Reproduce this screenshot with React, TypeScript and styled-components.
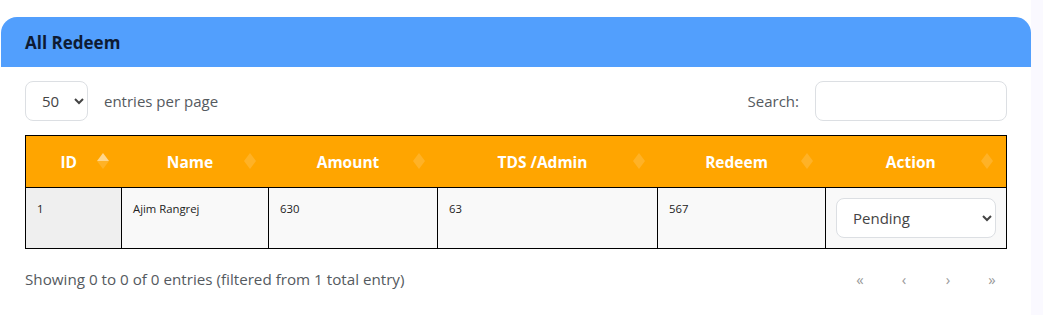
import React, { useState } from 'react'
import styled, { createGlobalStyle } from 'styled-components'

const GlobalStyle = createGlobalStyle`
  html, body {
    margin: 0;
    padding: 0;
    background: #ffffff;
    font-family: "Open Sans", "Noto Sans", sans-serif;
  }
`

type Column = { key: string; label: string; width: number; active?: boolean }

const columns: Column[] = [
  { key: 'id', label: 'ID', width: 96, active: true },
  { key: 'name', label: 'Name', width: 147 },
  { key: 'amount', label: 'Amount', width: 169 },
  { key: 'tds', label: 'TDS /Admin', width: 220 },
  { key: 'redeem', label: 'Redeem', width: 168 },
  { key: 'action', label: 'Action', width: 181 },
]

const rows = [{ id: 1, name: 'Ajim Rangrej', amount: 630, tds: 63, redeem: 567 }]

export default function App() {
  const [perPage, setPerPage] = useState('50')
  const [status, setStatus] = useState('Pending')

  return (
    <Page>
      <GlobalStyle />
      <Card>
        <CardHeader>
          <Title>All Redeem</Title>
        </CardHeader>
        <CardBody>
          <TopBar>
            <Group>
              <Select value={perPage} onChange={(e) => setPerPage(e.target.value)} width={63}>
                <option>10</option>
                <option>25</option>
                <option>50</option>
                <option>100</option>
              </Select>
              <Label>entries per page</Label>
            </Group>
            <Group>
              <Label>Search:</Label>
              <SearchInput type="text" />
            </Group>
          </TopBar>

          <Table>
            <colgroup>
              {columns.map((c) => (
                <col key={c.key} style={{ width: c.width }} />
              ))}
            </colgroup>
            <thead>
              <tr>
                {columns.map((c) => (
                  <Th key={c.key} active={c.active}>
                    {c.label}
                  </Th>
                ))}
              </tr>
            </thead>
            <tbody>
              {rows.map((r) => (
                <tr key={r.id}>
                  <Td sorted>{r.id}</Td>
                  <Td>{r.name}</Td>
                  <Td>{r.amount}</Td>
                  <Td>{r.tds}</Td>
                  <Td>{r.redeem}</Td>
                  <ActionTd>
                    <Select value={status} onChange={(e) => setStatus(e.target.value)} width={160}>
                      <option>Pending</option>
                      <option>Approved</option>
                      <option>Rejected</option>
                    </Select>
                  </ActionTd>
                </tr>
              ))}
            </tbody>
          </Table>

          <BottomBar>
            <Info>Showing 0 to 0 of 0 entries (filtered from 1 total entry)</Info>
            <Pager>
              <PageLink>«</PageLink>
              <PageLink>‹</PageLink>
              <PageLink>›</PageLink>
              <PageLink>»</PageLink>
            </Pager>
          </BottomBar>
        </CardBody>
      </Card>
    </Page>
  )
}

const Page = styled.div`
  padding: 17px 12px 0 1px;
  background: linear-gradient(to right, #ffffff 1031px, #faf9ff 1031px);
  min-height: 315px;
  box-sizing: border-box;
`

const Card = styled.div`
  width: 1030px;
  background: #ffffff;
  border-radius: 16px 16px 0 0;
`

const CardHeader = styled.div`
  height: 50px;
  display: flex;
  align-items: center;
  padding: 0 24px;
  background: #529ffd;
  border-radius: 16px 16px 0 0;
`

const Title = styled.h4`
  margin: 0;
  font-size: 17px;
  font-weight: 700;
  color: #0e1b33;
`

const CardBody = styled.div`
  padding: 14px 24px 20px 24px;
`

const TopBar = styled.div`
  display: flex;
  justify-content: space-between;
  align-items: center;
  height: 40px;
  margin-bottom: 14px;
`

const Group = styled.div`
  display: flex;
  align-items: center;
  gap: 16px;
`

const Label = styled.span`
  font-size: 15px;
  color: #555a60;
`

const Select = styled.select<{ width: number }>`
  width: ${(p) => p.width}px;
  height: 40px;
  padding: 0 8px 0 12px;
  font-family: inherit;
  font-size: 15px;
  color: #444;
  background: #ffffff;
  border: 1px solid #dcdfe3;
  border-radius: 8px;
  outline: none;
`

const SearchInput = styled.input`
  width: 192px;
  height: 40px;
  box-sizing: border-box;
  border: 1px solid #dcdfe3;
  border-radius: 8px;
  outline: none;
`

const Table = styled.table`
  width: 982px;
  border-collapse: collapse;
  table-layout: fixed;
  border: 1px solid #000;
`

const Th = styled.th<{ active?: boolean }>`
  position: relative;
  height: 51px;
  padding: 0 20px 0 10px;
  background: #ffa500;
  color: #ffffff;
  font-size: 15.5px;
  font-weight: 700;
  text-align: center;

  &::before,
  &::after {
    content: '';
    position: absolute;
    right: 13px;
    border-left: 6px solid transparent;
    border-right: 6px solid transparent;
  }
  &::before {
    top: 17px;
    border-bottom: 8px solid ${(p) => (p.active ? 'rgba(255,255,255,0.55)' : 'rgba(255,255,255,0.15)')};
  }
  &::after {
    top: 25px;
    border-top: 8px solid rgba(255, 255, 255, 0.15);
  }
`

const Td = styled.td<{ sorted?: boolean }>`
  height: 60px;
  padding: 13px 11px;
  vertical-align: top;
  border: 1px solid #000;
  background: ${(p) => (p.sorted ? '#efefef' : '#f9f9f9')};
  font-size: 11.3px;
  color: #222;
  box-sizing: border-box;
`

const ActionTd = styled(Td)`
  padding: 10px 10px;
`

const BottomBar = styled.div`
  display: flex;
  justify-content: space-between;
  align-items: center;
  margin-top: 20px;
`

const Info = styled.span`
  font-size: 15.2px;
  color: #555a60;
`

const Pager = styled.div`
  display: flex;
  margin-right: -7px;
`

const PageLink = styled.span`
  width: 44px;
  text-align: center;
  font-size: 15px;
  color: #9a9a9a;
`
